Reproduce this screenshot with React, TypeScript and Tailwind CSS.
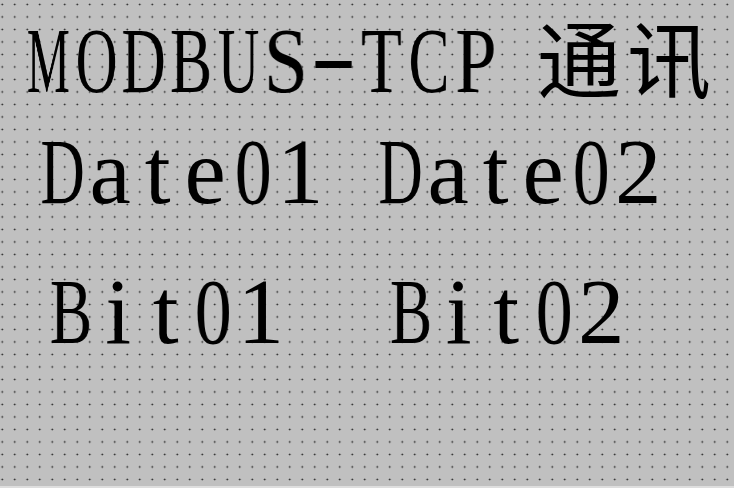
// Times glyphs are wider than a half-width cell, so capitals are squeezed to fit
const squeeze: Record<string, string> = {
  M: 'will-change-transform [transform:scaleX(0.52)]',
  O: 'will-change-transform [transform:scaleX(0.62)]',
  D: 'will-change-transform [transform:scaleX(0.66)]',
  B: 'will-change-transform [transform:scaleX(0.68)]',
  U: 'will-change-transform [transform:scaleX(0.62)]',
  S: 'will-change-transform [transform:scaleX(0.86)]',
  T: 'will-change-transform [transform:scaleX(0.72)]',
  C: 'will-change-transform [transform:scaleX(0.66)]',
  P: 'will-change-transform [transform:scaleX(0.8)]',
  '-': 'will-change-transform [transform:translateY(-5px)_scaleX(1.5)]',
  '0': 'will-change-transform [transform:scaleX(0.8)]',
}

function Mono({ text }: { text: string }) {
  return (
    <div className="flex font-['Liberation_Serif']">
      {text.split('').map((ch, i) => (
        <div key={i} className="flex w-[47.5px] shrink-0 justify-center">
          <span className={`inline-block font-['Liberation_Serif'] ${squeeze[ch] ?? ''}`}>{ch}</span>
        </div>
      ))}
    </div>
  )
}

export default function App() {
  return (
    <div className="relative h-[488px] w-[734px] overflow-hidden bg-[#c0c0c0] bg-[radial-gradient(circle,#1a1a1a_0.7px,transparent_1.1px)] bg-[length:12.5px_12.5px] bg-[position:-4px_-1.8px] pt-[14px] font-['Liberation_Serif'] text-black">
      <div className="flex flex-col text-[93px] leading-none">
        <div className="flex items-baseline pl-[25px]">
          <Mono text="MODBUS-TCP" />
          <div className="w-[37px] shrink-0" />
          <span className="font-['Noto_Sans_CJK_SC'] text-[84px] font-normal tracking-[6px]">通讯</span>
        </div>

        <div className="mt-[18px] flex gap-[53px] pl-[39px]">
          <Mono text="Date01" />
          <Mono text="Date02" />
        </div>

        <div className="mt-[47px] flex gap-[103px] pl-[47px]">
          <Mono text="Bit01" />
          <Mono text="Bit02" />
        </div>
      </div>

      <div className="absolute inset-x-0 bottom-0 h-[2px] bg-[#dedede]" />
    </div>
  )
}
